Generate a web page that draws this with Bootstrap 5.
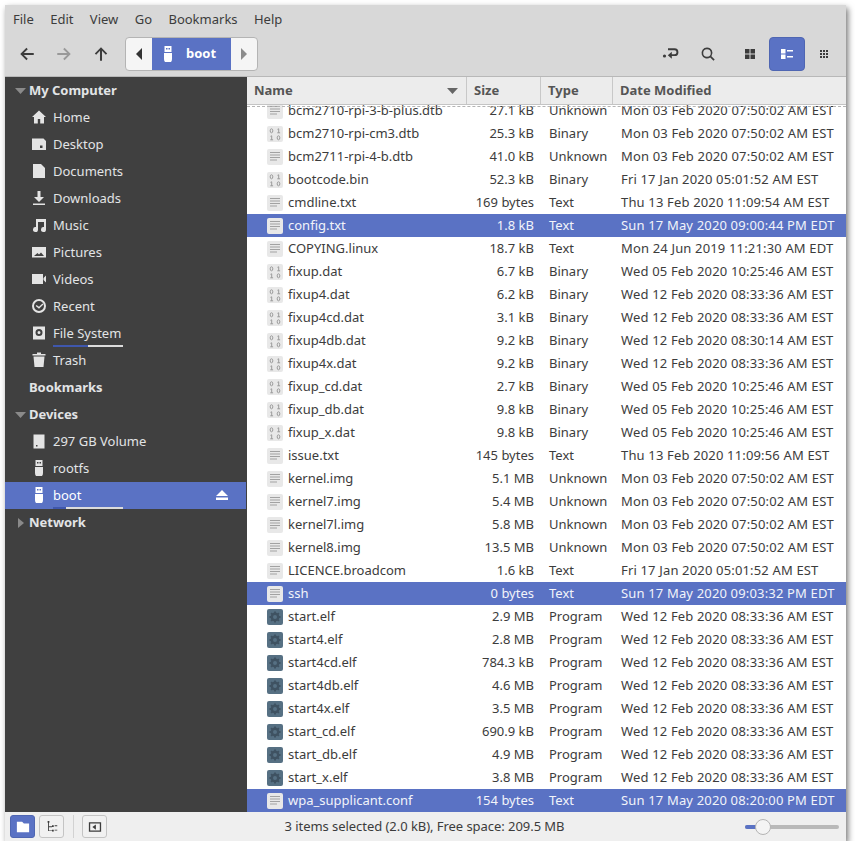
<!DOCTYPE html>
<html lang="en">
  <head>
    <meta charset="UTF-8" />
    <title>boot</title>
    <link href="https://cdn.jsdelivr.net/npm/bootstrap@5.3.2/dist/css/bootstrap.min.css" rel="stylesheet" />
    <style>
      body { background: #fff; font-family: "Noto Sans", "Liberation Sans", sans-serif; font-size: 13px; color: #3c3c3c; }
      .app-window { width: 841px; height: 836px; margin: 5px 0 0 5px; box-shadow: 2px 3px 6px rgba(0,0,0,.55); }
      .top-area { background: #d8d8d8; border-bottom: 1px solid #b8b8b8; height: 72px; }
      .menu-row { height: 32px; padding: 0 8px 2px; }
      .menu-row span { margin-right: 16.400px; }
      .tool-row { height: 34px; }
      .tool-icon { width: 18px; height: 18px; fill: #3c3c3c; flex: none; }
      .nav-slot { width: 37px; }
      .nav-first { margin-left: 3px; }
      .path-bar { margin-left: 6px; width: 133px; height: 34px; border: 1px solid #b4b4b4; border-radius: 4px; overflow: hidden; background: #f5f5f5; }
      .path-arrow { width: 26px; }
      .path-current { width: 79px; background: #5a72c4; color: #fff; font-weight: 700; gap: 10px; padding-left: 8px; }
      .right-tools { margin-left: auto; padding-right: 13px; }
      .jump-tool { margin-right: 19px; }
      .search-tool { margin-right: 24px; }
      .grid-tool { margin-right: 10px; }
      .compact-tool { margin-left: 10px; }
      .view-active { width: 36px; height: 34px; background: #5a72c4; border-radius: 4px; border: 1px solid #4f66b2; }
      .main-area { height: 735px; }
      .side-pane { width: 242px; background: #404040; color: #e2e4e6; flex: none; }
      .side-row { height: 27px; position: relative; padding-left: 24px; }
      .side-row.item { padding-left: 48px; }
      .side-row.head { font-weight: 700; letter-spacing: -.03px; }
      .side-row.picked { background: #5a72c4; color: #fff; width: 241px; }
      .side-icon { position: absolute; left: 26px; top: 5px; width: 16px; height: 16px; fill: #e4e4e4; }
      .picked .side-icon { fill: #fff; }
      .side-tri { position: absolute; left: 10px; top: 9px; width: 11px; height: 10px; fill: #8a8a8a; }
      .usage-bar { position: absolute; left: 48px; bottom: 0; width: 70px; height: 2px; background: #dcdcdc; }
      .usage-fill { display: block; height: 2px; background: #3f57ad; }
      .eject-icon { position: absolute; left: 210px; top: 6px; width: 14px; height: 14px; fill: #fff; }
      .list-pane { min-width: 0; background: #fff; }
      .col-header { height: 28px; background: #ececec; border-bottom: 1px solid #c4c4c4; font-weight: 700; color: #555; position: relative; z-index: 1; }
      .col-header::after { content: ""; position: absolute; left: 0; right: 0; bottom: -3px; border-top: 1px dashed #b4b4b4; }
      .col-header > div { padding-left: 7px; border-right: 1px solid #c8c8c8; }
      .cell-name { width: 220px; }
      .cell-size { width: 74px; }
      .cell-type { width: 72px; }
      .cell-date { width: 233px; }
      .col-header > .cell-date { border-right: 0; }
      .file-list { margin-top: -6px; overflow: hidden; flex: 1; }
      .file-row { height: 23px; }
      .file-row.picked { background: #5a72c4; color: #f2f4fa; }
      .file-row .cell-name { padding-left: 20px; gap: 5px; }
      .file-row .cell-size { text-align: right; padding-right: 7px; }
      .file-row .cell-type { padding-left: 8px; }
      .file-row .cell-date { padding-left: 8px; white-space: nowrap; letter-spacing: .16px; }
      .file-icon { width: 16px; height: 16px; flex: none; }
      .status-row { height: 29px; background: #efefef; position: relative; padding-left: 5px; }
      .status-btn { width: 25px; height: 23px; border: 1px solid #c4c4c4; border-radius: 3px; background: #f1f1f1; }
      .status-btn.on { background: #5a72c4; border-color: #4f66b2; }
      .status-btn svg { width: 14px; height: 14px; fill: #3c3c3c; }
      .status-btn.on svg { fill: #fff; }
      .status-sep { width: 1px; height: 23px; background: #d2d2d2; margin: 0 8px 0 9px; }
      .status-text { position: absolute; left: 0; right: 0; top: 5px; text-align: center; padding-right: 2px; letter-spacing: -.05px; }
      .zoom-track { position: absolute; left: 740px; top: 13px; width: 94px; height: 4px; border-radius: 2px; background: #b9b9b9; }
      .zoom-fill { position: absolute; left: 0; top: 0; width: 12px; height: 4px; border-radius: 2px; background: #5a72c4; }
      .zoom-thumb { position: absolute; left: 10px; top: -6px; width: 16px; height: 16px; border-radius: 50%; background: #f4f4f4; border: 1px solid #b4b4b4; }
    </style>
  </head>
  <body>
    <svg width="0" height="0" class="position-absolute">
      <defs>
        <symbol id="usb" viewBox="0 0 16 16"><path d="M4.500 0h7v6h-7zM6 2v1.500h1.500V2zM8.500 2v1.500H10V2zM4 7h8v6a4 4 0 0 1-8 0z" fill-rule="evenodd"/></symbol>
        <symbol id="ftext" viewBox="0 0 16 16"><rect width="16" height="16" rx="2" fill="#e8e8e8"/><path d="M3 3.500h10M3 6h10M3 8.500h10M3 11h7" stroke="#a2a2a2" stroke-width="1.100"/></symbol>
        <symbol id="fbin" viewBox="0 0 16 16"><rect width="16" height="16" rx="2" fill="#e8e8e8"/><g fill="none" stroke="#9a9a9a" stroke-width="1"><ellipse cx="4.500" cy="4.800" rx="1.300" ry="2"/><path d="M10.500 3.300l1.200-.5v4M10.300 6.800h2.800M3.500 10.300l1.200-.5v4M3.300 13.800h2.800"/><ellipse cx="11.500" cy="11.800" rx="1.300" ry="2"/></g></symbol>
        <symbol id="fprog" viewBox="0 0 16 16"><rect width="16" height="16" rx="2" fill="#567083"/><circle cx="8" cy="8" r="3.200" fill="none" stroke="#3f5262" stroke-width="2.400"/><path d="M8 2.500v2M8 11.500v2M2.500 8h2M11.500 8h2M4.100 4.100l1.400 1.400M10.500 10.500l1.400 1.400M4.100 11.900l1.400-1.400M10.500 5.500l1.400-1.400" stroke="#3f5262" stroke-width="1.800"/></symbol>
      </defs>
    </svg>

    <div class="app-window d-flex flex-column">
      <div class="top-area">
        <div class="menu-row d-flex align-items-center">
          <span>File</span><span>Edit</span><span>View</span><span>Go</span><span>Bookmarks</span><span>Help</span>
        </div>
        <div class="tool-row d-flex align-items-center">
          <div class="nav-slot nav-first d-flex justify-content-center">
            <svg class="tool-icon" viewBox="0 0 16 16"><path d="M7.500 2.500 2 8l5.500 5.500 1.200-1.200L5.200 8.900H14V7.100H5.200l3.500-3.400z"/></svg>
          </div>
          <div class="nav-slot d-flex justify-content-center">
            <svg class="tool-icon" viewBox="0 0 16 16" style="fill:#999"><path d="M8.500 2.500 14 8l-5.500 5.500-1.200-1.200 3.500-3.400H2V7.100h8.800L7.300 3.700z"/></svg>
          </div>
          <div class="nav-slot d-flex justify-content-center">
            <svg class="tool-icon" viewBox="0 0 16 16"><path d="M2.500 7.500 8 2l5.500 5.500-1.200 1.200-3.400-3.500V14H7.100V5.200L3.700 8.700z"/></svg>
          </div>
          <div class="path-bar d-flex">
            <div class="path-arrow d-flex align-items-center justify-content-center">
              <svg width="8" height="12" viewBox="0 0 8 12"><path d="M7 0v12L1 6z" fill="#333"/></svg>
            </div>
            <div class="path-current d-flex align-items-center">
              <svg width="16" height="16" fill="#fff"><use href="#usb"/></svg>
              <span>boot</span>
            </div>
            <div class="path-arrow d-flex align-items-center justify-content-center">
              <svg width="8" height="12" viewBox="0 0 8 12"><path d="M1 0v12l6-6z" fill="#8c8c8c"/></svg>
            </div>
          </div>
          <div class="right-tools d-flex align-items-center">
            <svg class="tool-icon jump-tool" viewBox="0 0 18 18"><circle cx="2.500" cy="11" r="1.600"/><path d="M6 3.300h6.500a3.900 3.900 0 0 1 0 7.800H9.800V13.700L5.800 10.200 9.800 6.700v2.500h2.700a2 2 0 0 0 0-4H6z"/></svg>
            <svg class="tool-icon search-tool" viewBox="0 0 18 18"><path d="M8 2.500a5.500 5.500 0 1 0 3.200 10l3.300 3.300 1.200-1.200-3.300-3.300A5.500 5.500 0 0 0 8 2.500zm0 1.700a3.800 3.800 0 1 1 0 7.600 3.800 3.800 0 0 1 0-7.600z"/></svg>
            <svg class="tool-icon grid-tool" viewBox="0 0 18 18"><path d="M4 4h4.500v4.500H4zM9.500 4H14v4.500H9.500zM4 9.500h4.500V14H4zM9.500 9.500H14V14H9.500z"/></svg>
            <div class="view-active d-flex align-items-center justify-content-center">
              <svg width="18" height="18" viewBox="0 0 18 18" fill="#fff"><path d="M3 4h4.500v4.500H3zM9 5h6v1.500H9zM3 9.500h4.500V14H3zM9 11h6v1.500H9z"/></svg>
            </div>
            <svg class="tool-icon compact-tool" viewBox="0 0 18 18"><path d="M5 5h2v2H5zM8 5h2v2H8zM11 5h2v2h-2zM5 8h2v2H5zM8 8h2v2H8zM11 8h2v2h-2zM5 11h2v2H5zM8 11h2v2H8zM11 11h2v2h-2z"/></svg>
          </div>
        </div>
      </div>

      <div class="main-area d-flex">
        <div class="side-pane">
          <div class="side-row head d-flex align-items-center"><svg class="side-tri" viewBox="0 0 11 10"><path d="M0 2h11L5.500 8z"/></svg>My Computer</div>
          <div class="side-row item d-flex align-items-center"><svg class="side-icon" viewBox="0 0 16 16"><path d="M8 1.500 1 8h2v6.500h3.800V10h2.400v4.500H13V8h2z"/></svg>Home</div>
          <div class="side-row item d-flex align-items-center"><svg class="side-icon" viewBox="0 0 16 16"><path d="M1 2.500h11.500L15 5v9H1zM9 9.500v2.500h2.500V9.500z" fill-rule="evenodd"/></svg>Desktop</div>
          <div class="side-row item d-flex align-items-center"><svg class="side-icon" viewBox="0 0 16 16"><path d="M2 1h8l4 4v10H2z"/></svg>Documents</div>
          <div class="side-row item d-flex align-items-center"><svg class="side-icon" viewBox="0 0 16 16"><path d="M6.500 1h3v6H13l-5 5-5-5h3.500zM2 13.500h12V15H2z"/></svg>Downloads</div>
          <div class="side-row item d-flex align-items-center"><svg class="side-icon" viewBox="0 0 16 16"><path d="M5 2h10v10.500a2.500 2.500 0 1 1-2-2.400V5H7v7.500a2.500 2.500 0 1 1-2-2.400z"/></svg>Music</div>
          <div class="side-row item d-flex align-items-center"><svg class="side-icon" viewBox="0 0 16 16"><path d="M1 3h14v10.500H1zM3 12h10l-3-3.500-2 2-1.500-1.500z" fill-rule="evenodd"/></svg>Pictures</div>
          <div class="side-row item d-flex align-items-center"><svg class="side-icon" viewBox="0 0 16 16"><path d="M1 3h11v10H1zM12.500 7 15 4.500v7L12.500 9z"/></svg>Videos</div>
          <div class="side-row item d-flex align-items-center"><svg class="side-icon" viewBox="0 0 16 16"><path d="M8 1a7 7 0 1 0 0 14A7 7 0 0 0 8 1zm0 2a5 5 0 1 1 0 10A5 5 0 0 1 8 3zm3.500 2.500L8 8.800 5.500 7 4.700 8.100 8 10.800l4.400-4.300z" fill-rule="evenodd"/></svg>Recent</div>
          <div class="side-row item d-flex align-items-center"><svg class="side-icon" viewBox="0 0 16 16"><path d="M2 1.500h12v13H2zM8 4a3.500 3.500 0 1 0 0 7 3.500 3.500 0 0 0 0-7zm0 2a1.500 1.500 0 1 1 0 3 1.500 1.500 0 0 1 0-3z" fill-rule="evenodd"/></svg>File System<span class="usage-bar"><span class="usage-fill w-50"></span></span></div>
          <div class="side-row item d-flex align-items-center"><svg class="side-icon" viewBox="0 0 16 16"><path d="M6 .5h4V2h4.500v1.500h-13V2H6zM2.500 4.500h11l-1 10.500h-9z"/></svg>Trash</div>
          <div class="side-row head d-flex align-items-center">Bookmarks</div>
          <div class="side-row head d-flex align-items-center"><svg class="side-tri" viewBox="0 0 11 10"><path d="M0 2h11L5.500 8z"/></svg>Devices</div>
          <div class="side-row item d-flex align-items-center"><svg class="side-icon" viewBox="0 0 16 16"><path d="M2.500 1.500h11v14h-11zM5 12v1.500h1.500V12z" fill-rule="evenodd"/></svg>297 GB Volume</div>
          <div class="side-row item d-flex align-items-center"><svg class="side-icon"><use href="#usb"/></svg>rootfs</div>
          <div class="side-row item picked d-flex align-items-center"><svg class="side-icon"><use href="#usb"/></svg>boot<span class="usage-bar"><span class="usage-fill" style="width:19%"></span></span><svg class="eject-icon" viewBox="0 0 14 14"><path d="M7 2l6 6H1zM1 9.500h12V12H1z"/></svg></div>
          <div class="side-row head d-flex align-items-center"><svg class="side-tri" viewBox="0 0 11 10"><path d="M3 0v10l6-5z"/></svg>Network</div>
        </div>

        <div class="list-pane flex-grow-1 d-flex flex-column">
          <div class="col-header d-flex flex-shrink-0">
            <div class="cell-name d-flex align-items-center justify-content-between pe-2">Name<svg width="11" height="8" viewBox="0 0 11 8"><path d="M0 1h11L5.500 7z" fill="#666"/></svg></div>
            <div class="cell-size d-flex align-items-center">Size</div>
            <div class="cell-type d-flex align-items-center">Type</div>
            <div class="cell-date d-flex align-items-center">Date Modified</div>
          </div>
          <div class="file-list" id="fileList"></div>
        </div>
      </div>

      <div class="status-row d-flex align-items-center">
        <div class="status-text">3 items selected (2.0 kB), Free space: 209.5 MB</div>
        <div class="status-btn on d-flex align-items-center justify-content-center me-1 position-relative"><svg viewBox="0 0 16 16"><path d="M1 2h6l2 2h6v10H1z"/></svg></div>
        <div class="status-btn d-flex align-items-center justify-content-center position-relative"><svg viewBox="0 0 16 16"><path d="M3 1h2v2H4.500v4H8V6h2v2H8V8.200H4.500V12H8v-1h2v2H8v-.5H3.500V3H3zM11 6h3v1h-3zM11 11h3v1h-3z"/></svg></div>
        <div class="status-sep"></div>
        <div class="status-btn d-flex align-items-center justify-content-center position-relative"><svg viewBox="0 0 16 16"><path d="M1 2.500h14v11H1zM2.500 4v8h11V4zM9 5v6L5 8z" fill-rule="evenodd"/></svg></div>
        <div class="zoom-track"><span class="zoom-fill"></span><span class="zoom-thumb"></span></div>
      </div>
    </div>

    <script src="https://cdn.jsdelivr.net/npm/bootstrap@5.3.2/dist/js/bootstrap.bundle.min.js"></script>
    <script>
      // name, size, type, date, selected
      const files = [
        ["bcm2710-rpi-3-b-plus.dtb", "27.1 kB", "Unknown", "Mon 03 Feb 2020 07:50:02 AM EST"],
        ["bcm2710-rpi-cm3.dtb", "25.3 kB", "Binary", "Mon 03 Feb 2020 07:50:02 AM EST"],
        ["bcm2711-rpi-4-b.dtb", "41.0 kB", "Unknown", "Mon 03 Feb 2020 07:50:02 AM EST"],
        ["bootcode.bin", "52.3 kB", "Binary", "Fri 17 Jan 2020 05:01:52 AM EST"],
        ["cmdline.txt", "169 bytes", "Text", "Thu 13 Feb 2020 11:09:54 AM EST"],
        ["config.txt", "1.8 kB", "Text", "Sun 17 May 2020 09:00:44 PM EDT", true],
        ["COPYING.linux", "18.7 kB", "Text", "Mon 24 Jun 2019 11:21:30 AM EDT"],
        ["fixup.dat", "6.7 kB", "Binary", "Wed 05 Feb 2020 10:25:46 AM EST"],
        ["fixup4.dat", "6.2 kB", "Binary", "Wed 12 Feb 2020 08:33:36 AM EST"],
        ["fixup4cd.dat", "3.1 kB", "Binary", "Wed 12 Feb 2020 08:33:36 AM EST"],
        ["fixup4db.dat", "9.2 kB", "Binary", "Wed 12 Feb 2020 08:30:14 AM EST"],
        ["fixup4x.dat", "9.2 kB", "Binary", "Wed 12 Feb 2020 08:33:36 AM EST"],
        ["fixup_cd.dat", "2.7 kB", "Binary", "Wed 05 Feb 2020 10:25:46 AM EST"],
        ["fixup_db.dat", "9.8 kB", "Binary", "Wed 05 Feb 2020 10:25:46 AM EST"],
        ["fixup_x.dat", "9.8 kB", "Binary", "Wed 05 Feb 2020 10:25:46 AM EST"],
        ["issue.txt", "145 bytes", "Text", "Thu 13 Feb 2020 11:09:56 AM EST"],
        ["kernel.img", "5.1 MB", "Unknown", "Mon 03 Feb 2020 07:50:02 AM EST"],
        ["kernel7.img", "5.4 MB", "Unknown", "Mon 03 Feb 2020 07:50:02 AM EST"],
        ["kernel7l.img", "5.8 MB", "Unknown", "Mon 03 Feb 2020 07:50:02 AM EST"],
        ["kernel8.img", "13.5 MB", "Unknown", "Mon 03 Feb 2020 07:50:02 AM EST"],
        ["LICENCE.broadcom", "1.6 kB", "Text", "Fri 17 Jan 2020 05:01:52 AM EST"],
        ["ssh", "0 bytes", "Text", "Sun 17 May 2020 09:03:32 PM EDT", true],
        ["start.elf", "2.9 MB", "Program", "Wed 12 Feb 2020 08:33:36 AM EST"],
        ["start4.elf", "2.8 MB", "Program", "Wed 12 Feb 2020 08:33:36 AM EST"],
        ["start4cd.elf", "784.3 kB", "Program", "Wed 12 Feb 2020 08:33:36 AM EST"],
        ["start4db.elf", "4.6 MB", "Program", "Wed 12 Feb 2020 08:33:36 AM EST"],
        ["start4x.elf", "3.5 MB", "Program", "Wed 12 Feb 2020 08:33:36 AM EST"],
        ["start_cd.elf", "690.9 kB", "Program", "Wed 12 Feb 2020 08:33:36 AM EST"],
        ["start_db.elf", "4.9 MB", "Program", "Wed 12 Feb 2020 08:33:36 AM EST"],
        ["start_x.elf", "3.8 MB", "Program", "Wed 12 Feb 2020 08:33:36 AM EST"],
        ["wpa_supplicant.conf", "154 bytes", "Text", "Sun 17 May 2020 08:20:00 PM EDT", true],
      ];
      const iconFor = { Binary: "fbin", Program: "fprog" };
      document.getElementById("fileList").innerHTML = files
        .map(([name, size, type, date, picked]) => `
          <div class="file-row d-flex align-items-center${picked ? " picked" : ""}">
            <div class="cell-name d-flex align-items-center"><svg class="file-icon"><use href="#${iconFor[type] || "ftext"}"/></svg>${name}</div>
            <div class="cell-size">${size}</div>
            <div class="cell-type">${type}</div>
            <div class="cell-date">${date}</div>
          </div>`)
        .join("");
    </script>
  </body>
</html>
